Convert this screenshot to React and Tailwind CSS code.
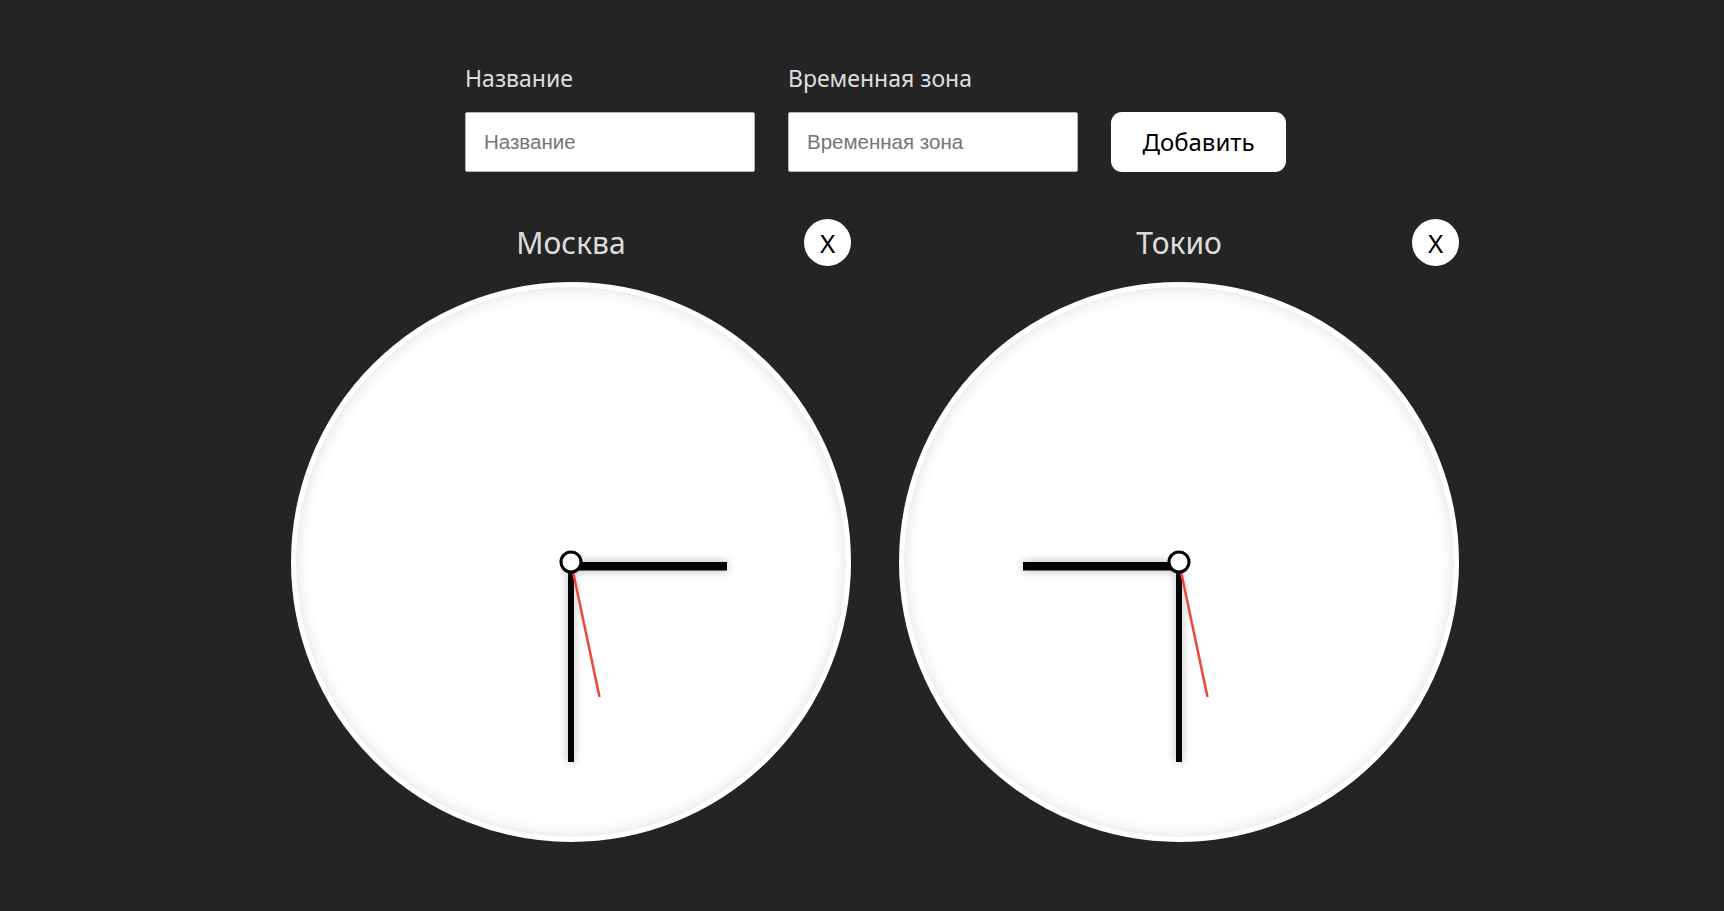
import React from "react";

function Clock({ title, hourDir }) {
  const cx = 280;
  const cy = 280;
  return (
    <div className="flex flex-col w-[560px]">
      <div className="grid grid-cols-[1fr_auto_1fr] items-center h-[47px]">
        <div />
        <div className="text-[30px] leading-[45px] text-[rgba(255,255,255,0.87)]">{title}</div>
        <div className="flex justify-end">
          <button className="w-[47px] h-[47px] rounded-full bg-white text-black text-[26px] leading-none flex items-center justify-center">
            X
          </button>
        </div>
      </div>
      <div className="relative w-[560px] h-[560px] mt-[16px]">
        <div className="absolute inset-0 rounded-full bg-white border-[5px] border-white shadow-[inset_0_0_16px_rgba(0,0,0,0.13)]" />
        <svg
          className="absolute inset-0"
          width="560"
          height="560"
          viewBox="0 0 560 560"
        >
          <defs>
            <filter id={`sh-${hourDir}`} x="-50%" y="-50%" width="200%" height="200%">
              <feDropShadow dx="0" dy="0" stdDeviation="5" floodColor="#000" floodOpacity="0.3" />
            </filter>
          </defs>
          <g filter={`url(#sh-${hourDir})`}>
            {hourDir === 1 ? (
              <rect x={cx} y={cy} width="156" height="8.5" fill="#000" />
            ) : (
              <rect x={cx - 156} y={cy} width="156" height="8.5" fill="#000" />
            )}
            <rect x={cx - 3} y={cy} width="6" height="200" fill="#000" />
          </g>
          <line x1={cx} y1={cy} x2={cx + 28.5} y2={cy + 135} stroke="#f0453a" strokeWidth="2.5" />
          <circle cx={cx} cy={cy} r="10" fill="#fff" stroke="#000" strokeWidth="3" />
        </svg>
      </div>
    </div>
  );
}

export default function App() {
  return (
    <div
      className="min-h-screen w-full bg-[#242424] overflow-hidden"
      style={{ fontFamily: '"Noto Sans", "Open Sans", sans-serif' }}
    >
      <div className="flex items-end gap-[33px] ml-[465px] pt-[60px]">
        <div className="flex flex-col gap-[16px]">
          <label className="text-[23px] leading-[36px] text-[rgba(255,255,255,0.87)]">Название</label>
          <input
            placeholder="Название"
            className="w-[290px] h-[60px] bg-white border border-[#b5b5b5] rounded-[2px] px-[18px] text-[20.5px] text-black placeholder:text-[#757575] outline-none"
            style={{ fontFamily: '"Liberation Sans", Arial, sans-serif' }}
          />
        </div>
        <div className="flex flex-col gap-[16px]">
          <label className="text-[23px] leading-[36px] text-[rgba(255,255,255,0.87)]">Временная зона</label>
          <input
            placeholder="Временная зона"
            className="w-[290px] h-[60px] bg-white border border-[#b5b5b5] rounded-[2px] px-[18px] text-[20.5px] text-black placeholder:text-[#757575] outline-none"
            style={{ fontFamily: '"Liberation Sans", Arial, sans-serif' }}
          />
        </div>
        <button className="w-[175px] h-[60px] bg-white text-black rounded-[11px] text-[24px] font-normal">
          Добавить
        </button>
      </div>
      <div className="flex gap-[48px] ml-[291px] mt-[47px]">
        <Clock title="Москва" hourDir={1} />
        <Clock title="Токио" hourDir={-1} />
      </div>
    </div>
  );
}
